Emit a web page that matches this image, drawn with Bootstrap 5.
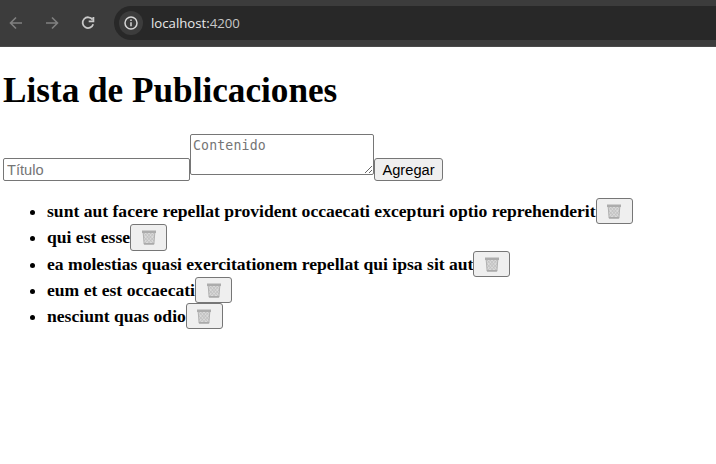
<!DOCTYPE html>
<html lang="es">
<head>
<meta charset="utf-8">
<meta name="viewport" content="width=device-width, initial-scale=1">
<title>Lista de Publicaciones</title>
<link href="https://cdn.jsdelivr.net/npm/bootstrap@5.3.0/dist/css/bootstrap.min.css" rel="stylesheet">
<style>
body{font-family:"Liberation Serif",serif;font-size:17.6px;color:#000;background:#fff;overflow:hidden}
.browser-bar{height:47px;background:#3c3c3c;border-bottom:1px solid #4a4a4a;padding-left:7px}
.tool{width:18px;height:18px;margin-right:18px;flex:none}
.address{height:34px;background:#282828;border-radius:17px 0 0 17px;margin-left:-1px;padding-left:5px;font:13.2px "Open Sans",sans-serif;color:#e8e8e8}
.address .port{color:#c7c7c7}
.info{width:24px;height:24px;background:#3c3c3c;margin-right:8px}
.page{padding-left:3px}
h1.title{font-size:35.2px;font-weight:700;line-height:40px;margin:24px 0 0}
.entry{height:47px;margin-top:23px}
.field{border:1px solid #767676;border-radius:2px;background:#fff;color:#000;outline:0;display:block}
.field::placeholder{color:#757575;opacity:1}
.f-title{width:187px;height:23px;margin-top:24px;padding:1px 3px;font:14.67px "Liberation Sans",sans-serif}
.f-body{width:184px;height:41px;padding:2px;font:13.2px/18px "DejaVu Sans Mono",monospace;letter-spacing:.15px;resize:both;overflow:hidden}
.plain{border:1px solid #767676;border-radius:3px;background:#efefef;color:#000;padding:0}
.b-add{width:69px;height:23px;margin-top:24px;font:14.67px/20px "Liberation Sans",sans-serif}
.posts{margin:17px 0 0;padding-left:44px}
.posts li{height:26.3px;line-height:26.3px;font-weight:700}
.posts li::marker{font-weight:400}
.b-del{width:37px;height:26.3px}
.b-del svg{width:16px;height:16px;display:block}
</style>
<script src="https://cdn.jsdelivr.net/npm/bootstrap@5.3.0/dist/js/bootstrap.bundle.min.js"></script>
</head>
<body>
<svg width="0" height="0" class="d-none">
<symbol id="bin" viewBox="0 0 16 16">
<path d="M1.800 3.500h12.400L13.200 15.500H2.800z" fill="#d9d9d9"/>
<path d="M3 4l9 10M6 4l7 8M9.500 4l4 4M3 8l6 6.500M13 4l-9 10M10 4l-7 8M6.500 4l-4 4M13 8l-6 6.500" stroke="#bcbcbc" stroke-width=".8" fill="none"/>
<path d="M2.200 4l1 11h9.600L13.800 4" stroke="#b1b1b1" fill="none"/>
<path d="M1 1.500h14v2.500H1z" fill="#acacac"/><path d="M2.900 14h10.200v1.500H3z" fill="#aaa"/>
</symbol>
</svg>
<header class="browser-bar d-flex align-items-center">
<svg class="tool" viewBox="0 0 18 18" fill="none" stroke="#808080" stroke-width="1.600"><path d="M15 9H4M9 3.500L3.500 9 9 14.500"/></svg>
<svg class="tool" viewBox="0 0 18 18" fill="none" stroke="#808080" stroke-width="1.600"><path d="M3 9h11M9 3.500L14.500 9 9 14.500"/></svg>
<svg class="tool" viewBox="0 0 18 18" fill="none" stroke="#c9c9c9" stroke-width="1.800"><path d="M13.500 5.600A5.400 5.400 0 1 0 14.200 10.300M14.400 3v4.300H9.700"/></svg>
<div class="address d-flex align-items-center flex-grow-1">
<span class="info rounded-circle d-flex align-items-center justify-content-center"><svg width="16" height="16" viewBox="0 0 16 16" fill="none" stroke="#d6d6d6" stroke-width="1.500"><circle cx="8" cy="8" r="6"/><path d="M8 7.200v4M8 4.500v1.500"/></svg></span>
<span class="url">localhost:<span class="port">4200</span></span>
</div>
</header>
<main class="page">
<h1 class="title">Lista de Publicaciones</h1>
<form class="entry d-flex align-items-start">
<input class="field f-title" type="text" placeholder="Título"><textarea class="field f-body" placeholder="Contenido"></textarea><button type="button" class="plain b-add">Agregar</button>
</form>
<ul class="posts">
<li><div class="d-flex"><span>sunt aut facere repellat provident occaecati excepturi optio reprehenderit</span><button type="button" class="plain b-del d-flex align-items-center justify-content-center" aria-label="Eliminar"><svg><use href="#bin"/></svg></button></div></li>
<li><div class="d-flex"><span>qui est esse</span><button type="button" class="plain b-del d-flex align-items-center justify-content-center" aria-label="Eliminar"><svg><use href="#bin"/></svg></button></div></li>
<li><div class="d-flex"><span>ea molestias quasi exercitationem repellat qui ipsa sit aut</span><button type="button" class="plain b-del d-flex align-items-center justify-content-center" aria-label="Eliminar"><svg><use href="#bin"/></svg></button></div></li>
<li><div class="d-flex"><span>eum et est occaecati</span><button type="button" class="plain b-del d-flex align-items-center justify-content-center" aria-label="Eliminar"><svg><use href="#bin"/></svg></button></div></li>
<li><div class="d-flex"><span>nesciunt quas odio</span><button type="button" class="plain b-del d-flex align-items-center justify-content-center" aria-label="Eliminar"><svg><use href="#bin"/></svg></button></div></li>
</ul>
</main>
</body>
</html>
